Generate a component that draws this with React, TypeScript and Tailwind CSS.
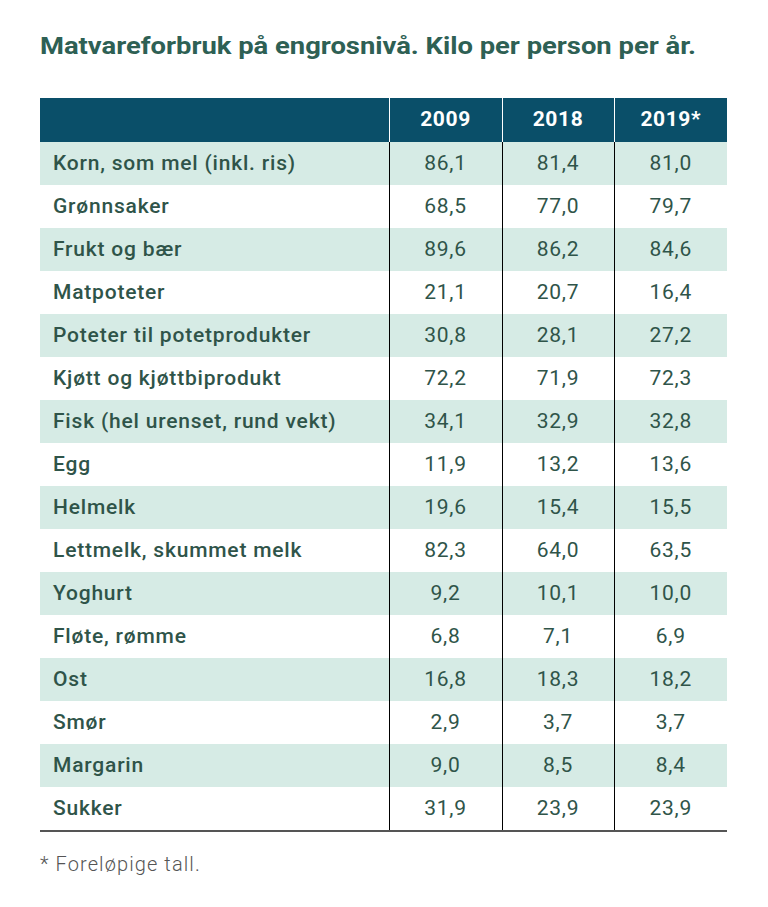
const rows: [string, string, string, string][] = [
  ["Korn, som mel (inkl. ris)", "86,1", "81,4", "81,0"],
  ["Grønnsaker", "68,5", "77,0", "79,7"],
  ["Frukt og bær", "89,6", "86,2", "84,6"],
  ["Matpoteter", "21,1", "20,7", "16,4"],
  ["Poteter til potetprodukter", "30,8", "28,1", "27,2"],
  ["Kjøtt og kjøttbiprodukt", "72,2", "71,9", "72,3"],
  ["Fisk (hel urenset, rund vekt)", "34,1", "32,9", "32,8"],
  ["Egg", "11,9", "13,2", "13,6"],
  ["Helmelk", "19,6", "15,4", "15,5"],
  ["Lettmelk, skummet melk", "82,3", "64,0", "63,5"],
  ["Yoghurt", "9,2", "10,1", "10,0"],
  ["Fløte, rømme", "6,8", "7,1", "6,9"],
  ["Ost", "16,8", "18,3", "18,2"],
  ["Smør", "2,9", "3,7", "3,7"],
  ["Margarin", "9,0", "8,5", "8,4"],
  ["Sukker", "31,9", "23,9", "23,9"],
];

export default function App() {
  return (
    <div className="min-h-[907px] w-[768px] bg-white px-10 pt-[30px] font-['Roboto',sans-serif]">
      <h1 className="text-[23px] font-bold leading-[34px] text-[#2e6054]">
        <span className="inline-block origin-left scale-x-[1.19] whitespace-nowrap">
          Matvareforbruk på engrosnivå. Kilo per person per år.
        </span>
      </h1>

      <table className="mt-[34px] w-[687px] border-collapse">
        <thead>
          <tr className="h-[44px] bg-[#0a4f69] text-[21px] font-bold tracking-[0.6px] text-white">
            <th className="w-[349px]"></th>
            <th className="w-[113px] border-l border-white">2009</th>
            <th className="w-[112px] border-l border-white">2018</th>
            <th className="border-l border-white">2019*</th>
          </tr>
        </thead>
        <tbody className="text-[21px] tracking-[0.8px] text-[#2f5449]">
          {rows.map((r, i) => (
            <tr
              key={r[0]}
              className={`h-[43px] ${i % 2 === 0 ? "bg-[#d6ebe5]" : "bg-white"}`}
            >
              <td className="pl-[13px] font-medium">{r[0]}</td>
              <td className="border-l border-black text-center">{r[1]}</td>
              <td className="border-l border-black text-center">{r[2]}</td>
              <td className="border-l border-black text-center">{r[3]}</td>
            </tr>
          ))}
        </tbody>
      </table>
      <div className="h-[2px] w-[687px] bg-[#555]"></div>

      <p className="mt-[17px] text-[20px] font-light tracking-[1.1px] text-[#555]">* Foreløpige tall.</p>
    </div>
  );
}
